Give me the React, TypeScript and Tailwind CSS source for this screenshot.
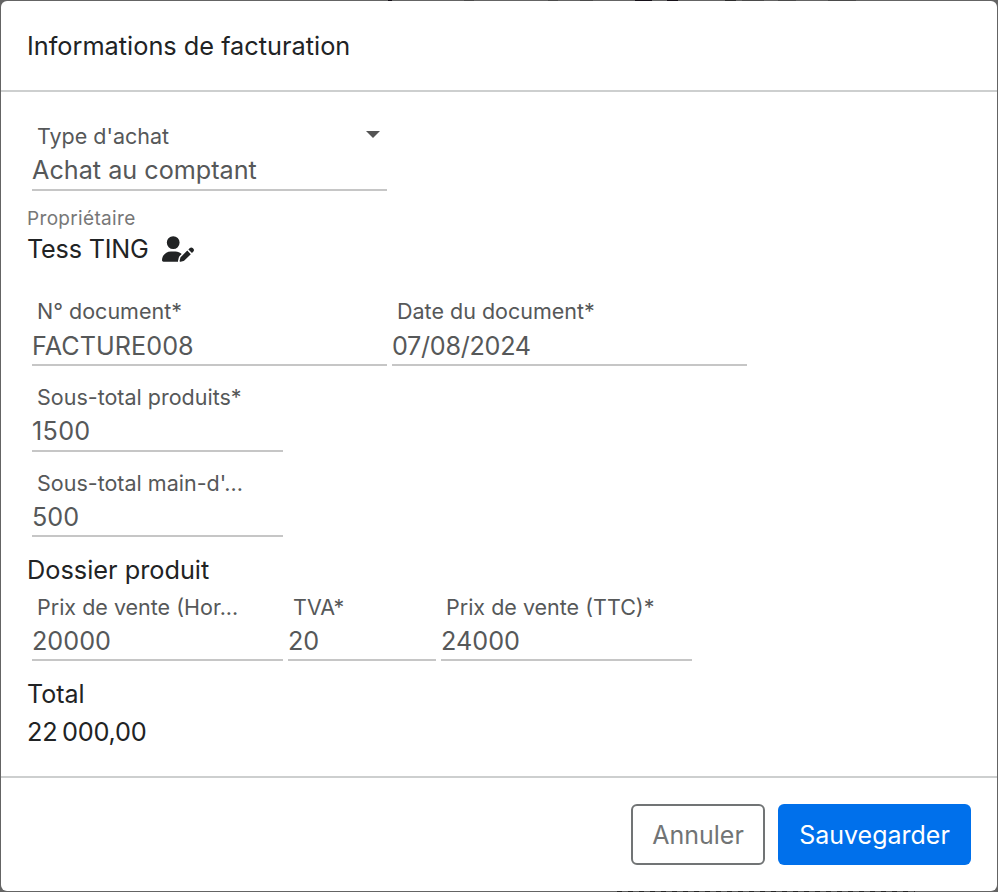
import React from "react";
import { FaUserPen } from "react-icons/fa6";

type FieldProps = {
  label: string;
  value: string;
  className?: string;
  valueClass?: string;
  height?: string;
  caret?: boolean;
};

function Field({ label, value, className = "", valueClass = "leading-[37px]", height = "h-[71px]", caret = false }: FieldProps) {
  return (
    <div className={`flex flex-col border-b-2 border-[#c6c6c6] text-[#565859] ${height} ${className}`}>
      <div className="flex items-start justify-between pl-[5px] pr-[7px]">
        <span className="whitespace-nowrap text-[21.5px] leading-[32px]">{label}</span>
        {caret && <svg className="mt-[11px]" width="14" height="7" viewBox="0 0 14 7"><path d="M0 0h14L7 7z" fill="#545454" /></svg>}
      </div>
      <span className={`text-[25.2px] ${valueClass}`}>{value}</span>
    </div>
  );
}

const topMarks = [
  { x: 388, w: 4, c: "#151018" },
  { x: 464, w: 10, c: "#4a4a4a" },
  { x: 548, w: 10, c: "#4a4a4a" },
  { x: 580, w: 13, c: "#4a4a4a" },
  { x: 635, w: 17, c: "#151018" },
  { x: 667, w: 11, c: "#151018" },
  { x: 725, w: 11, c: "#2c2c2c" },
  { x: 742, w: 22, c: "#4a4a4a" },
  { x: 778, w: 18, c: "#4a4a4a" },
  { x: 828, w: 28, c: "#4a4a4a" },
];

export default function App() {
  return (
    <div className="relative h-[892px] w-[998px] overflow-hidden bg-[#646464] p-px">
      {topMarks.map((m) => (
        <i key={m.x} className="absolute top-0 h-px" style={{ left: m.x, width: m.w, background: m.c }} />
      ))}
      <i className="absolute bottom-0 left-[617px] h-px w-[298px] bg-[repeating-linear-gradient(90deg,#242424_0_5px,#5c5c5c_5px_11px)]" />
      <div className="flex h-[890px] w-[996px] flex-col overflow-hidden rounded-[6px] bg-white font-['Inter',sans-serif] text-[#212324]">
        <header className="flex h-[91px] shrink-0 items-center border-b-2 border-[#cdcfcf] px-[26px] text-[25.3px]">Informations de facturation</header>
        <main className="h-[686px] shrink-0 border-b-2 border-[#cdcfcf] px-[26px] pt-[28px]">
          <Field label="Type d'achat" value="Achat au comptant" className="ml-[5px] w-[355px]" caret />
          <div className="mt-[15px] text-[19px] leading-[26px] tracking-[0.33px] text-[#777]">Propriétaire</div>
          <div className="flex h-[33px] items-center gap-[13px] text-[25.2px] tracking-[-0.2px]">
            <span className="pt-[2px]">Tess TING</span>
            <FaUserPen size={32} />
          </div>
          <div className="ml-[5px] mt-[30px] flex gap-[5px]">
            <Field label="N° document*" value="FACTURE008" className="w-[355px]" valueClass="leading-[39px] tracking-[0.05px]" />
            <Field label="Date du document*" value="07/08/2024" className="w-[355px]" valueClass="leading-[39px] tracking-[-0.3px]" />
          </div>
          <Field label="Sous-total produits*" value="1500" className="ml-[5px] mt-[15px] w-[251px]" valueClass="leading-[37px] tracking-[0.3px]" />
          <Field label="Sous-total main-d'..." value="500" className="ml-[5px] mt-[15px] w-[251px]" height="h-[70px]" />
          <h2 className="mt-[14px] text-[25.3px] leading-[38px]">Dossier produit</h2>
          <div className="ml-[5px] mt-[2px] flex gap-[5px]">
            <Field label="Prix de vente (Hor..." value="20000" className="w-[251px]" height="h-[70px]" />
            <Field label="TVA*" value="20" className="w-[148px]" height="h-[70px]" />
            <Field label="Prix de vente (TTC)*" value="24000" className="w-[251px]" height="h-[70px]" />
          </div>
          <h2 className="mt-[14px] text-[25px] leading-[38px]">Total</h2>
          <div className="text-[25.3px] leading-[38px] tracking-[-0.2px]">22{"\u2009"}000,00</div>
        </main>
        <footer className="flex flex-1 items-center justify-end gap-[13px] px-[26px] text-[25px]">
          <button className="h-[61px] w-[134px] rounded-[6px] border-2 border-[#717475] pt-[2px] text-[#717475]">Annuler</button>
          <button className="h-[61px] w-[193px] rounded-[6px] bg-[#0070eb] pt-[2px] text-white">Sauvegarder</button>
        </footer>
      </div>
    </div>
  );
}
